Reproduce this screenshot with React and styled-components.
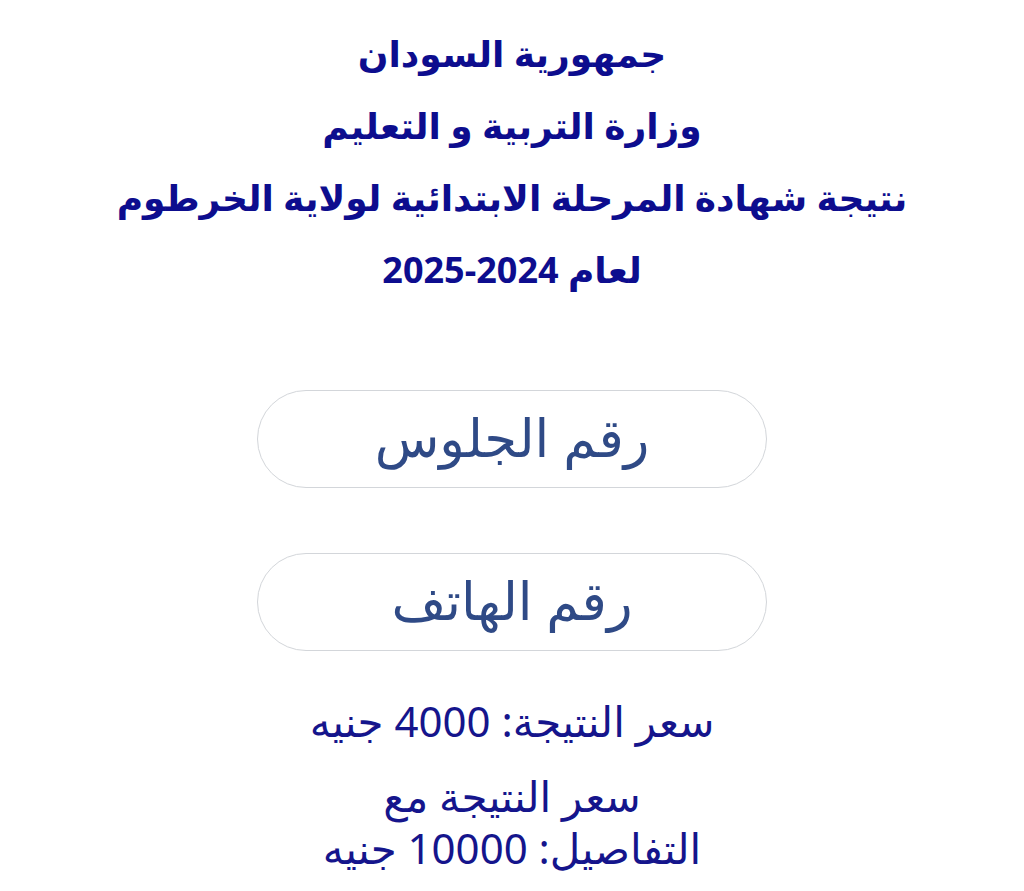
import React from 'react';
import styled, { createGlobalStyle } from 'styled-components';

const GlobalStyle = createGlobalStyle`
  html, body {
    margin: 0;
    padding: 0;
    background: #ffffff;
  }
  body {
    font-family: "Noto Sans", "DejaVu Sans", sans-serif;
  }
`;

const Page = styled.div`
  direction: rtl;
  display: flex;
  flex-direction: column;
  align-items: center;
  padding-top: 18px;
  width: 1024px;
  min-height: 891px;
  box-sizing: border-box;
`;

const Header = styled.div`
  display: flex;
  flex-direction: column;
  align-items: center;
`;

const Title = styled.h2`
  margin: 0;
  color: #0d0d8e;
  font-size: 36px;
  font-weight: 700;
  line-height: 72px;
  text-align: center;
`;

const Form = styled.div`
  display: flex;
  flex-direction: column;
  align-items: center;
  gap: 65px;
  margin-top: 84px;
`;

const Field = styled.input`
  width: 510px;
  height: 98px;
  box-sizing: border-box;
  border: 1.5px solid #d3d6da;
  border-radius: 49px;
  background: #fff;
  text-align: center;
  font-family: inherit;
  font-size: 53px;
  direction: rtl;
  outline: none;
  padding: 0 0 6px;
  &::placeholder {
    color: #2f4a86;
  }
`;

const Prices = styled.div`
  display: flex;
  flex-direction: column;
  align-items: center;
  gap: 23px;
  margin-top: 44px;
`;

const Price = styled.p`
  margin: 0;
  color: #15158c;
  font-size: 42px;
  line-height: 52px;
  text-align: center;
`;

export default function App() {
  return (
    <>
      <GlobalStyle />
      <Page>
        <Header>
          <Title>جمهورية السودان</Title>
          <Title>وزارة التربية و التعليم</Title>
          <Title>نتيجة شهادة المرحلة الابتدائية لولاية الخرطوم</Title>
          <Title>لعام 2024-2025</Title>
        </Header>
        <Form>
          <Field placeholder="رقم الجلوس" />
          <Field placeholder="رقم الهاتف" />
        </Form>
        <Prices>
          <Price>سعر النتيجة: 4000 جنيه</Price>
          <Price>
            سعر النتيجة مع
            <br />
            التفاصيل: 10000 جنيه
          </Price>
        </Prices>
      </Page>
    </>
  );
}
